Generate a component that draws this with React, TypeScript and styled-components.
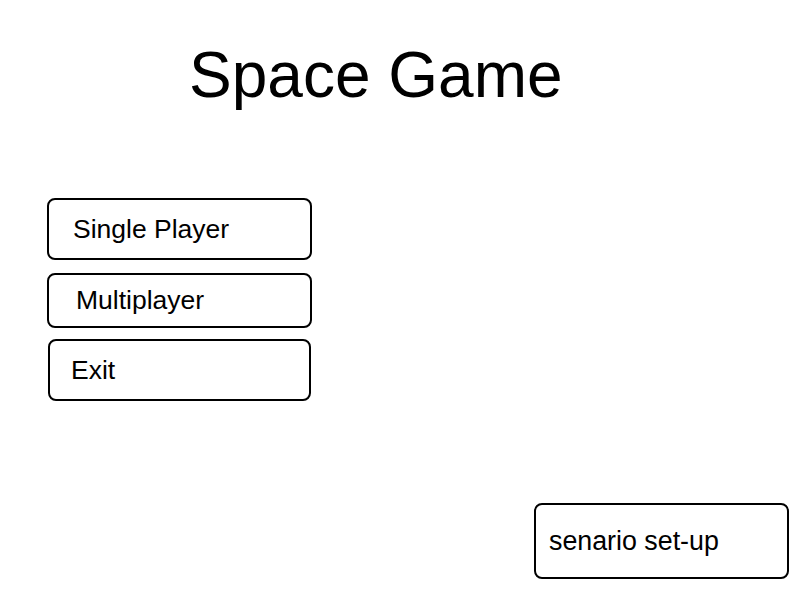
import styled, { createGlobalStyle } from "styled-components";

const Global = createGlobalStyle`
    html, body {
        margin: 0;
        padding: 0;
        background: #ffffff;
    }
    body {
        font-family: "Liberation Sans", Arial, sans-serif;
        color: #000000;
    }
`;

const Page = styled.div`
    width: 800px;
    height: 600px;
    display: flex;
    flex-direction: column;
    box-sizing: border-box;
`;

const Title = styled.h1`
    margin: 43px 0 0 189px;
    font-size: 64px;
    line-height: 64px;
    font-weight: normal;
`;

const Menu = styled.div`
    display: flex;
    flex-direction: column;
    width: 265px;
    margin: 91px 0 0 47px;
`;

const MenuButton = styled.button<{ $h: number; $pad: number; $gap: number; $inset?: number }>`
    display: flex;
    align-items: center;
    height: ${p => p.$h}px;
    margin-top: ${p => p.$gap}px;
    margin-left: ${p => p.$inset ?? 0}px;
    width: ${p => 265 - 2 * (p.$inset ?? 0)}px;
    padding: 0 0 0 ${p => p.$pad}px;
    box-sizing: border-box;
    border: 2px solid #000000;
    border-radius: 8px;
    background: #ffffff;
    font-family: "Liberation Sans", Arial, sans-serif;
    font-size: 26.5px;
    color: #000000;
    text-align: left;
`;

const Footer = styled.div`
    margin-top: auto;
    display: flex;
    justify-content: flex-end;
    padding: 0 11px 21px 0;
`;

const SetupButton = styled.button`
    display: flex;
    align-items: center;
    width: 255px;
    height: 76px;
    padding: 0 0 0 13px;
    box-sizing: border-box;
    border: 2px solid #000000;
    border-radius: 8px;
    background: #ffffff;
    font-family: "Liberation Sans", Arial, sans-serif;
    font-size: 26.8px;
    color: #000000;
`;

export default function App() {
    return (
        <Page>
            <Global />
            <Title>Space Game</Title>
            <Menu>
                <MenuButton $h={62} $pad={24} $gap={0}>Single Player</MenuButton>
                <MenuButton $h={55} $pad={27} $gap={13}>Multiplayer</MenuButton>
                <MenuButton $h={62} $pad={21} $gap={11} $inset={1}>Exit</MenuButton>
            </Menu>
            <Footer>
                <SetupButton>senario set-up</SetupButton>
            </Footer>
        </Page>
    );
}
